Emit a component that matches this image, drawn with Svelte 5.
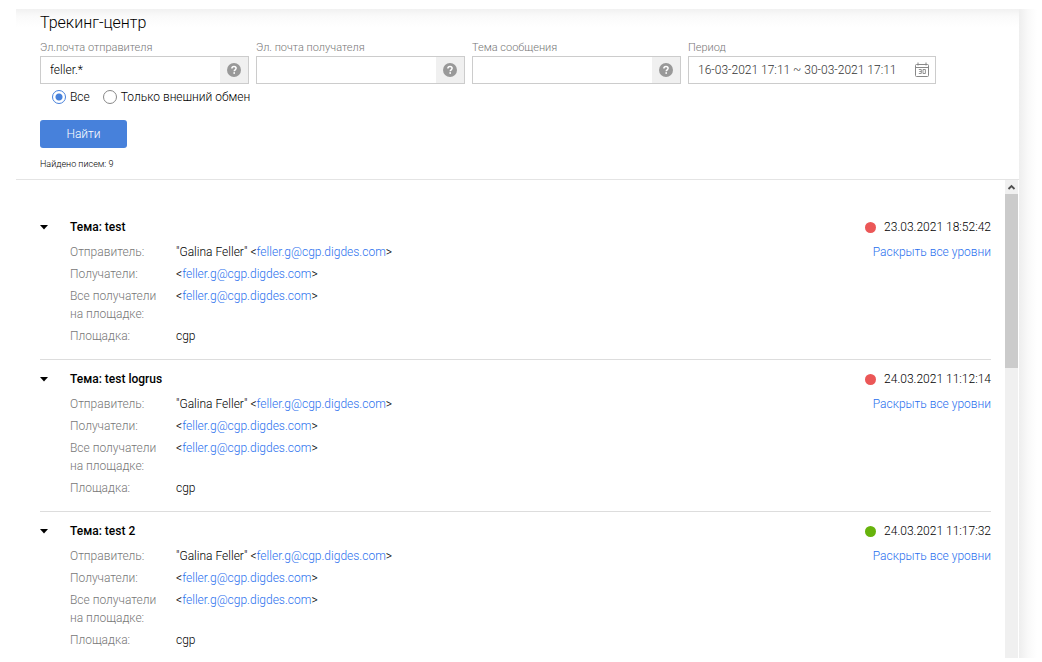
<script>
  const address = 'feller.g@cgp.digdes.com';
  const letters = [
    { subject: 'test', date: '23.03.2021 18:52:42', ok: false },
    { subject: 'test logrus', date: '24.03.2021 11:12:14', ok: false },
    { subject: 'test 2', date: '24.03.2021 11:17:32', ok: true }
  ];
  const fields = $state([
    { id: 'sender', label: 'Эл.почта отправителя', value: 'feller.*' },
    { id: 'recipient', label: 'Эл. почта получателя', value: '' },
    { id: 'subject', label: 'Тема сообщения', value: '' }
  ]);
  let period = $state('16-03-2021 17:11 ~ 30-03-2021 17:11');
  let scope = $state('all');
</script>

{#snippet mail()}
  &lt;<a href="mailto:{address}">{address}</a>&gt;
{/snippet}

<div class="page">
  <main class="panel">
    <form class="search" onsubmit={(e) => e.preventDefault()}>
      <h1>Трекинг-центр</h1>
      <div class="fields">
        {#each fields as field (field.id)}
          <div class="field">
            <label for={field.id}>{field.label}</label>
            <div class="box">
              <input id={field.id} type="text" bind:value={field.value} />
              <button class="help" type="button" aria-label="Справка">
                <svg width="14" height="14" viewBox="0 0 14 14">
                  <circle cx="7" cy="7" r="7" fill="#999" />
                  <path d="M4.9 5.5C4.9 4.2 5.8 3.5 7 3.5s2.1.7 2.1 1.8c0 1.5-1.9 1.5-1.9 3" fill="none" stroke="#fff" stroke-width="1.5" />
                  <rect x="6.4" y="9.2" width="1.6" height="1.6" fill="#fff" />
                </svg>
              </button>
            </div>
          </div>
        {/each}
        <div class="field period">
          <label for="period">Период</label>
          <div class="box">
            <input id="period" type="text" bind:value={period} />
            <button class="calendar" type="button" aria-label="Календарь">
              <svg width="16" height="16" viewBox="0 0 16 16" fill="none" stroke="#888">
                <path d="M2.5 2.5h11q1 0 1 1v10q0 1-1 1h-11q-1 0-1-1v-10q0-1 1-1zM1.5 5.5h13M4 .5v3M12 .5v3" />
                <path d="M4.8 7.5h2.5v4H4.8M5.3 9.5h2M9 7.5h2.4v4H9z" stroke-width=".9" />
              </svg>
            </button>
          </div>
        </div>
      </div>
      <div class="scope">
        <label><input type="radio" name="scope" value="all" bind:group={scope} />Все</label>
        <label><input type="radio" name="scope" value="external" bind:group={scope} />Только внешний обмен</label>
      </div>
      <button class="submit" type="submit">Найти</button>
      <p class="found">Найдено писем: 9</p>
    </form>

    <div class="results">
      <div class="list">
        {#each letters as letter}
          <article>
            <button class="toggle" type="button" aria-label="Свернуть">
              <svg width="8" height="5" viewBox="0 0 8 5"><path d="M0 0h8L4 4.6z" fill="#000" /></svg>
            </button>
            <div class="details">
              <h2>Тема: {letter.subject}</h2>
              <dl>
                <dt>Отправитель:</dt>
                <dd>"Galina Feller" {@render mail()}</dd>
                <dt>Получатели:</dt>
                <dd>{@render mail()}</dd>
                <dt>Все получатели на площадке:</dt>
                <dd>{@render mail()}</dd>
                <dt>Площадка:</dt>
                <dd>cgp</dd>
              </dl>
            </div>
            <div class="status">
              <span class="date"><i class:ok={letter.ok}></i>{letter.date}</span>
              <a href="#levels">Раскрыть все уровни</a>
            </div>
          </article>
        {/each}
      </div>
      <div class="scrollbar">
        <svg width="13" height="14" viewBox="0 0 13 14"><path d="M3.5 9L6.5 6l3 3" fill="none" stroke="#505050" stroke-width="1.8" /></svg>
        <div class="thumb"></div>
      </div>
    </div>
  </main>
</div>

<style>
  :global(body) {
    margin: 0;
    background: #fff;
  }
  .page {
    box-sizing: border-box;
    height: 100vh;
    padding: 9px 0 4px 16px;
    display: flex;
    overflow: hidden;
    font-family: Roboto, sans-serif;
    font-size: 12px;
    font-weight: 300;
    line-height: 18px;
    color: #000;
  }
  .page::after {
    content: '';
    flex: 0 0 23px;
    background: linear-gradient(to right, #eee, #f9f9f9 9px, #fff 18px);
  }
  .panel {
    flex: 1;
    min-width: 0;
    display: flex;
    flex-direction: column;
    background: linear-gradient(#f1f1f1, #fafafa 7px, #fff 18px);
  }
  input, button {
    font: inherit;
    color: inherit;
    margin: 0;
    padding: 0;
    border: 0;
    background: none;
  }
  svg {
    display: block;
  }
  a {
    color: #2a70ee;
    text-decoration: none;
  }
  .search {
    padding: 4px 83px 6px 24px;
    border-bottom: 1px solid #e4e4e4;
  }
  h1 {
    margin: 0 0 6px;
    font-size: 16px;
    font-weight: 300;
    line-height: 20px;
  }
  .fields {
    display: grid;
    grid-template-columns: repeat(3, 209fr) 248fr;
    gap: 7px;
  }
  .field {
    min-width: 0;
  }
  .field label {
    display: block;
    font-size: 11px;
    line-height: 17px;
    color: #777;
  }
  .box {
    display: flex;
    height: 26px;
    border: 1px solid #ccc;
    background: #fff;
  }
  .box input {
    flex: 1;
    min-width: 0;
    padding: 0 9px;
    outline: 0;
  }
  .help {
    width: 28px;
    display: grid;
    place-items: center;
    background: #f0f0f0;
  }
  .calendar {
    width: 26px;
    display: grid;
    place-items: center;
  }
  .period input {
    color: #333;
  }
  .scope {
    display: flex;
    gap: 13px;
    padding: 4px 12px 14px;
  }
  .scope label {
    display: flex;
    align-items: center;
    gap: 4px;
  }
  .scope input {
    appearance: none;
    box-sizing: border-box;
    width: 14px;
    height: 14px;
    border: 1px solid #888;
    border-radius: 50%;
    background: #fff;
  }
  .scope input:checked {
    border-color: #4781db;
    background: radial-gradient(#4781db 3px, #fff 4px);
  }
  .submit {
    display: block;
    width: 87px;
    height: 28px;
    border-radius: 3px;
    background: #4781db;
    color: #fff;
  }
  .found {
    margin: 7px 0 0;
    font-size: 9px;
  }
  .results {
    flex: 1;
    min-height: 0;
    display: flex;
    padding-right: 1px;
    background: #fff;
  }
  .list {
    flex: 1;
    min-width: 0;
    overflow: hidden;
    padding: 28px 14px 0 24px;
  }
  article {
    display: flex;
    padding: 10px 0 14px;
    border-bottom: 1px solid #ddd;
  }
  .toggle {
    width: 30px;
    height: 18px;
    display: flex;
    align-items: center;
  }
  .details {
    flex: 1;
  }
  h2 {
    margin: 0 0 7px;
    font-size: 12px;
    font-weight: 500;
    line-height: 18px;
  }
  dl {
    margin: 0;
    display: grid;
    grid-template-columns: 92px 1fr;
    gap: 4px 14px;
  }
  dt {
    color: #777;
  }
  dd {
    margin: 0;
  }
  .status {
    display: flex;
    flex-direction: column;
    align-items: flex-end;
    gap: 7px;
  }
  .date {
    display: flex;
    align-items: center;
    gap: 8px;
  }
  .date i {
    width: 11px;
    height: 11px;
    border-radius: 50%;
    background: #eb5757;
  }
  .date i.ok {
    background: #67b30c;
  }
  .scrollbar {
    width: 13px;
    background: #f0f0f0;
  }
  .thumb {
    height: 174px;
    background: #cbcbcb;
  }
</style>
